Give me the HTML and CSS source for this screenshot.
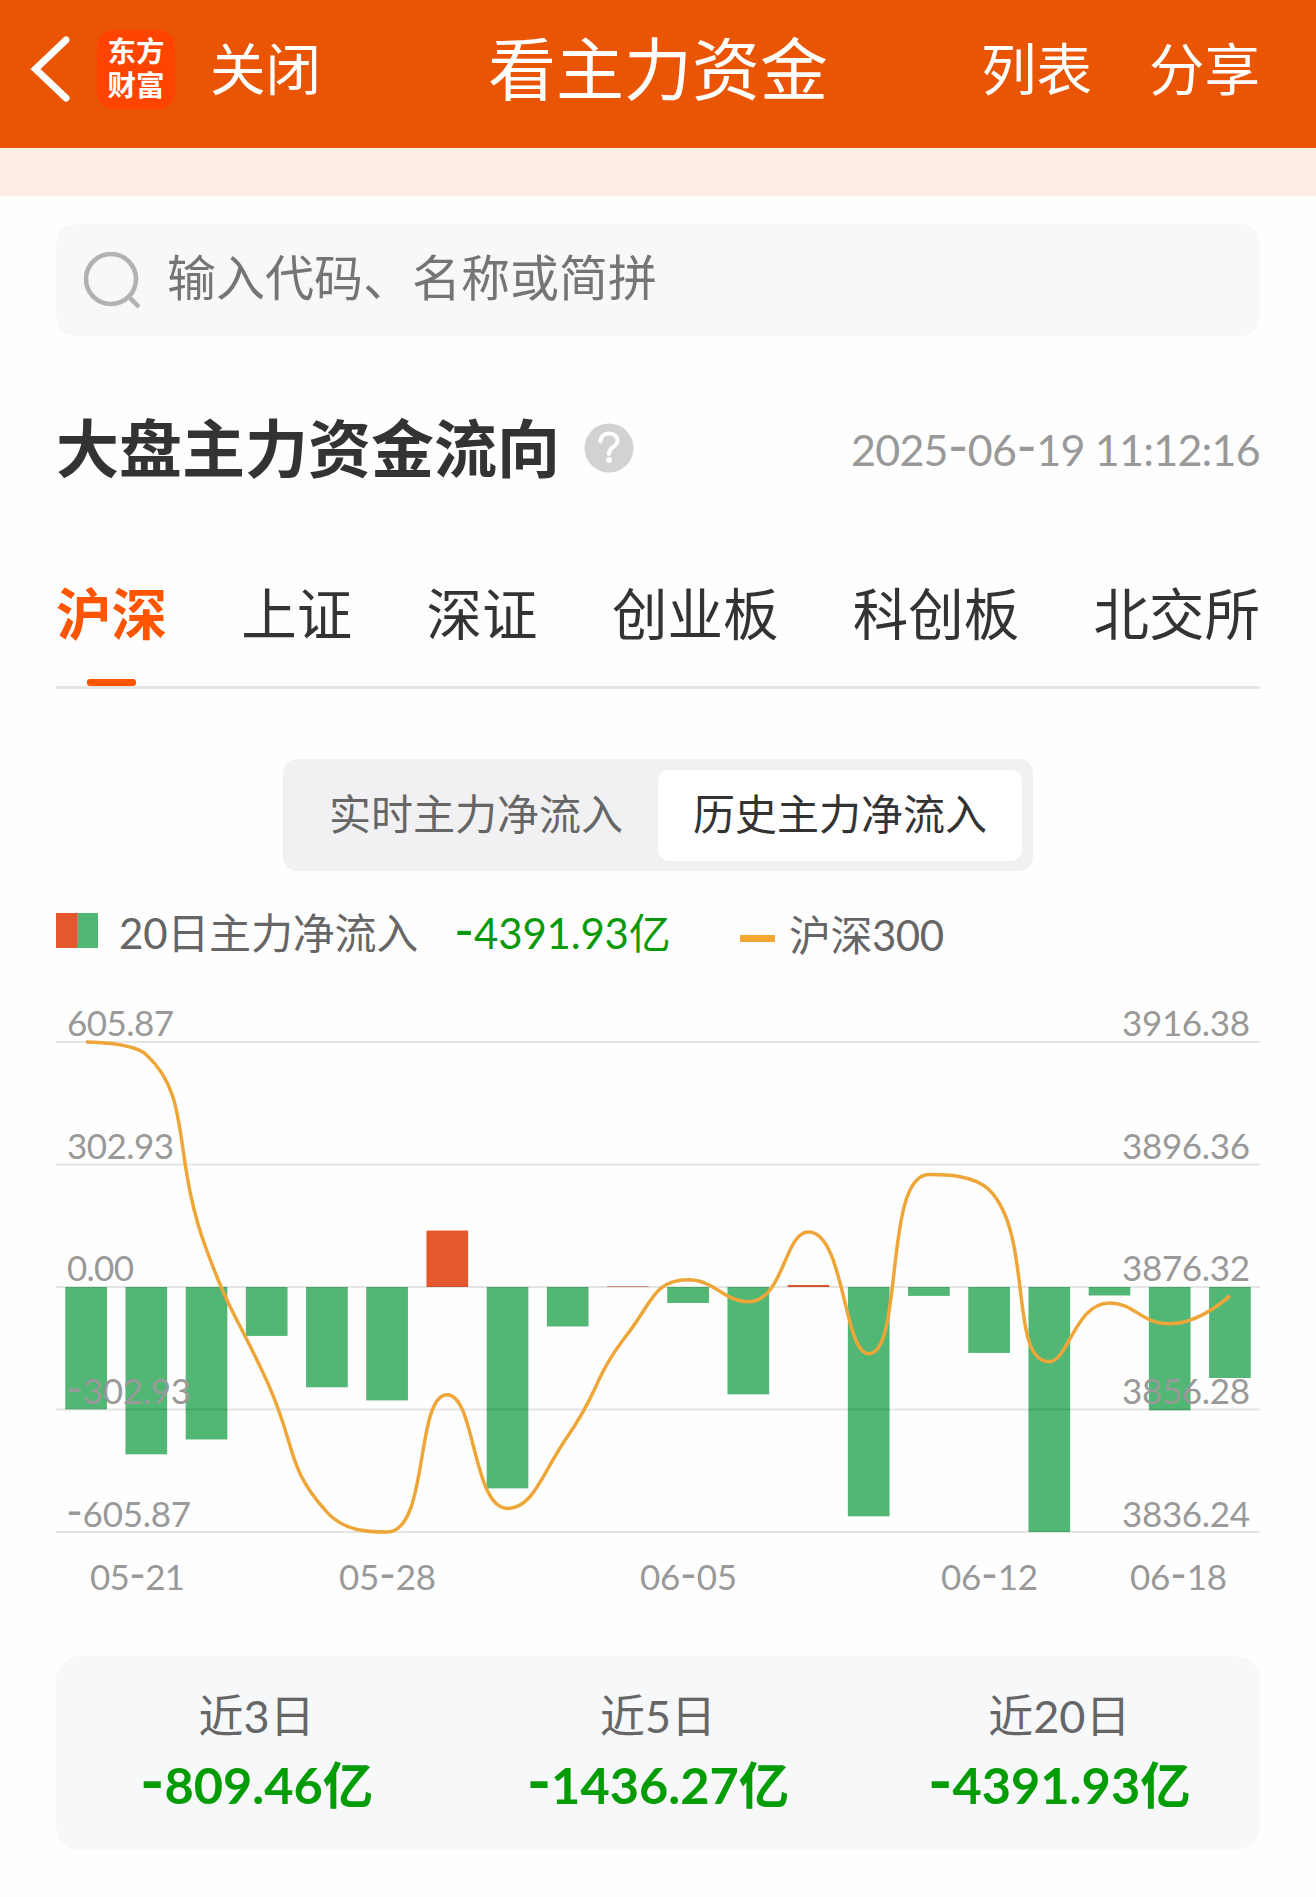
FILE: index.html
```html
<!DOCTYPE html>
<html lang="zh-CN">
<head>
<meta charset="utf-8">
<title>看主力资金</title>
<link rel="stylesheet" href="styles.css">
</head>
<body>
<header class="navbar">
  <div class="nav-left">
    <svg class="back" width="40" height="66" viewBox="0 0 40 66"><path d="M36 4 5.500 33 36 62"/></svg>
    <div class="logo"><span>东方</span><span>财富</span></div>
    <span class="nav-link">关闭</span>
  </div>
  <h1 class="nav-title">看主力资金</h1>
  <div class="nav-right">
    <span class="nav-link">列表</span>
    <span class="nav-link">分享</span>
  </div>
</header>
<div class="notice"></div>
<main class="content">
  <div class="search">
    <svg class="search-icon" width="56" height="56" viewBox="0 0 56 56"><circle cx="27" cy="27" r="25"/><path d="M45 45 55 55"/></svg>
    <span class="placeholder">输入代码、名称或简拼</span>
  </div>
  <div class="heading">
    <h2 class="heading-title">大盘主力资金流向</h2>
    <svg class="help" width="50" height="50" viewBox="0 0 50 50"><circle class="help-disc" cx="25" cy="25" r="24.500"/><path class="help-hook" d="M16.500 18.500C16.500 13.500 20 10.500 25 10.500S33.500 13.500 33.500 18C33.500 23.500 25 23.500 25 31"/><circle class="help-dot" cx="25" cy="37" r="3"/></svg>
    <time class="stamp">2025<span class="minus">-</span>06<span class="minus">-</span>19 11:12:16</time>
  </div>
  <nav class="tabs">
    <span class="tab tab-active">沪深</span>
    <span class="tab">上证</span>
    <span class="tab">深证</span>
    <span class="tab">创业板</span>
    <span class="tab">科创板</span>
    <span class="tab">北交所</span>
  </nav>
  <div class="segment">
    <span class="segment-item">实时主力净流入</span>
    <span class="segment-item segment-on">历史主力净流入</span>
  </div>
  <div class="legend">
    <i class="swatch"></i>
    <span class="legend-name">20日主力净流入</span>
    <span class="legend-value"><span class="minus">-</span>4391.93亿</span>
    <span class="legend-index"><i class="dash"></i>沪深300</span>
  </div>
  <svg class="chart" width="1204" height="660" viewBox="0 0 1204 660">
    <g id="bars"></g>
    <path class="grid" d="M0 80H1204M0 202.500H1204M0 325H1204M0 447.500H1204M0 570H1204"/>
    <path id="curve" class="curve"/>
    <g class="axis">
      <text x="11" y="74" textLength="107">605.87</text>
      <text x="11" y="196.500" textLength="107">302.93</text>
      <text x="11" y="319" textLength="67">0.00</text>
      <text x="10" y="441.500" textLength="125"><tspan class="minus">-</tspan>302.93</text>
      <text x="10" y="564.500" textLength="125"><tspan class="minus">-</tspan>605.87</text>
    </g>
    <g class="axis">
      <text x="1066" y="74" textLength="128">3916.38</text>
      <text x="1066" y="196.500" textLength="128">3896.36</text>
      <text x="1066" y="319" textLength="128">3876.32</text>
      <text x="1066" y="441.500" textLength="128">3856.28</text>
      <text x="1066" y="564.500" textLength="128">3836.24</text>
    </g>
    <g class="axis">
      <text x="34" y="628" textLength="95">05<tspan class="minus">-</tspan>21</text>
      <text x="283" y="628" textLength="97">05<tspan class="minus">-</tspan>28</text>
      <text x="584" y="628" textLength="97">06<tspan class="minus">-</tspan>05</text>
      <text x="885" y="628" textLength="97">06<tspan class="minus">-</tspan>12</text>
      <text x="1074" y="628" textLength="97">06<tspan class="minus">-</tspan>18</text>
    </g>
  </svg>
  <section class="summary">
    <div class="stat"><span class="stat-label">近3日</span><strong class="stat-value"><span class="minus">-</span>809.46亿</strong></div>
    <div class="stat"><span class="stat-label">近5日</span><strong class="stat-value"><span class="minus">-</span>1436.27亿</strong></div>
    <div class="stat"><span class="stat-label">近20日</span><strong class="stat-value"><span class="minus">-</span>4391.93亿</strong></div>
  </section>
</main>
<script src="chart.js"></script>
</body>
</html>
```

FILE: styles.css
```css
* { box-sizing: border-box; }

body {
  margin: 0;
  background: #fefefe;
  color: #333;
  font-family: Lato, "Noto Sans CJK SC", sans-serif;
}

h1, h2 { margin: 0; }

.minus { font-size: 1.3em; line-height: 0; }

.navbar {
  display: grid;
  grid-template-columns: minmax(0, 1fr) auto minmax(0, 1fr);
  align-items: center;
  height: 148px;
  padding: 0 56px 10px;
  background: #ea5504;
  color: #fff;
}

.nav-left, .nav-right { display: flex; align-items: center; }
.nav-left { margin-left: -26px; }
.nav-right { justify-content: flex-end; gap: 57px; }
.back { flex: none; fill: none; stroke: #fff; stroke-width: 7; stroke-linecap: round; }

.logo {
  display: flex;
  flex: none;
  flex-direction: column;
  align-items: center;
  justify-content: center;
  width: 78px;
  height: 79px;
  margin: 0 35px 0 27px;
  padding-bottom: 2px;
  border-radius: 16px;
  background: #ff4400;
  font-size: 28.500px;
  font-weight: 700;
  line-height: 34px;
}

.nav-link { font-size: 55.500px; line-height: 80px; white-space: nowrap; }
.nav-title { font-size: 68px; font-weight: 400; line-height: 96px; }

.notice { height: 48px; background: #ffede5; }

.content { padding: 28px 56px 47px; }

.search {
  display: flex;
  align-items: center;
  gap: 27px;
  height: 112px;
  padding: 0 28px;
  border-radius: 20px;
  background: #f7f8fa;
}

.search-icon { fill: none; stroke: #b2b2b2; stroke-width: 4.600; }
.placeholder { padding-bottom: 6px; color: #757575; font-size: 49px; line-height: 70px; }

.heading { display: flex; align-items: center; height: 80px; margin-top: 72px; }
.heading-title { font-size: 63px; font-weight: 700; line-height: 80px; }
.help { margin-left: 24px; }
.help-disc { fill: #d2d2d4; }
.help-hook { fill: none; stroke: #fff; stroke-width: 4; stroke-linecap: round; }
.help-dot { fill: #fff; }
.stamp { margin-left: auto; padding-top: 3px; color: #999; font-size: 43px; letter-spacing: -0.750px; }

.tabs {
  display: flex;
  justify-content: space-between;
  height: 115px;
  margin-top: 86px;
  border-bottom: 3px solid #e5e5e5;
}

.tab { font-size: 55.500px; line-height: 80px; }

.tab-active {
  display: flex;
  flex-direction: column;
  align-items: center;
  justify-content: space-between;
  color: #ff5500;
  font-weight: 700;
}

.tab-active::after {
  content: "";
  width: 49px;
  height: 7px;
  border-radius: 3px;
  background: #ff5500;
}

.segment {
  display: flex;
  width: 750px;
  height: 112px;
  margin: 70px auto 0;
  padding: 11px 11px 10px;
  border-radius: 14px;
  background: #f1f1f3;
}

.segment-item {
  flex: 1;
  border-radius: 11px;
  color: #666;
  font-size: 42px;
  line-height: 88px;
  text-align: center;
}

.segment-on { background: #fff; color: #333; }

.legend {
  display: flex;
  align-items: center;
  height: 60px;
  margin-top: 31px;
  color: #666;
  font-size: 42px;
  line-height: 60px;
}

.swatch {
  width: 42px;
  height: 35px;
  margin: -3px 21px 0 0;
  background: linear-gradient(90deg, #e5572c 50%, #52b774 50%);
}

.legend-name { width: 335px; padding-top: 1px; letter-spacing: -0.200px; }
.legend-value { width: 286px; padding-top: 1px; color: #099909; letter-spacing: -0.200px; }
.legend-index { display: flex; align-items: center; padding-top: 6px; letter-spacing: -0.500px; }
.dash { width: 35px; height: 7px; margin: 6px 14px 0 0; background: #f5a532; }

.chart { display: block; }
.bar-up { fill: #e5572c; }
.bar-down { fill: #52b774; }
.grid { stroke: rgba(0, 0, 0, 0.1); stroke-width: 2; }
.curve { fill: none; stroke: #efa638; stroke-width: 3.500; }
.axis { fill: #999; font-size: 35px; }

.summary {
  display: grid;
  grid-template-columns: repeat(3, 1fr);
  height: 194px;
  margin-top: 34px;
  padding-top: 30px;
  border-radius: 24px;
  background: #f7f8fa;
}

.stat { display: flex; flex-direction: column; align-items: center; gap: 9px; line-height: 60px; }
.stat-label { color: #666; font-size: 45px; }
.stat-value { color: #049c04; font-size: 50.500px; font-weight: 700; }
```

FILE: chart.js
```js
const flows = [-302.6, -413.8, -377, -121, -248, -280.5, 139.6, -498, -97.6, 1.5,
  -39.5, -265.5, 5, -567, -22, -163, -605.87, -21, -305, -225];
const index = [3916.38, 3914.3, 3882.4, 3861, 3839.5, 3836.24, 3858.7, 3840.1, 3851.9, 3868.7,
  3877.5, 3873.9, 3885.3, 3865.4, 3894.7, 3892.2, 3864.1, 3873.7, 3870.3, 3874.9];

const TOP = 80, ZERO = 325, BOTTOM = 570;
const BAND = 1204 / flows.length, BAR = 41.7;
const NS = 'http://www.w3.org/2000/svg';
const bars = document.getElementById('bars');

flows.forEach((v, i) => {
  const h = Math.abs(v) / 605.87 * (BOTTOM - ZERO);
  const r = document.createElementNS(NS, 'rect');
  r.setAttribute('class', v > 0 ? 'bar-up' : 'bar-down');
  r.setAttribute('x', BAND * (i + 0.5) - BAR / 2);
  r.setAttribute('y', v > 0 ? ZERO - h : ZERO);
  r.setAttribute('width', BAR);
  r.setAttribute('height', h);
  bars.appendChild(r);
});

const pts = index.map((v, i) => [
  BAND * (i + 0.5),
  TOP + (3916.38 - v) / (3916.38 - 3836.24) * (BOTTOM - TOP)
]);
const clamp = (v, a, b) => Math.max(Math.min(v, Math.max(a, b)), Math.min(a, b));

// Smooth spline whose handles never leave the box of the neighbouring points.
let d = `M${pts[0]}`;
let out = pts[0];
for (let i = 1; i < pts.length; i++) {
  const p = pts[i], prev = pts[i - 1], next = pts[i + 1];
  let into = p, leave = p;
  if (next) {
    const a = Math.hypot(p[0] - prev[0], p[1] - prev[1]);
    const b = Math.hypot(next[0] - p[0], next[1] - p[1]);
    leave = p.map((c, k) => clamp(c + (next[k] - prev[k]) * 0.5 * b / (a + b), next[k], c));
    into = p.map((c, k) => clamp(c - (leave[k] - c) * a / b, prev[k], c));
    leave = p.map((c, k) => c + (c - into[k]) * b / a);
  }
  d += `C${out} ${into} ${p}`;
  out = leave;
}
document.getElementById('curve').setAttribute('d', d);
```
